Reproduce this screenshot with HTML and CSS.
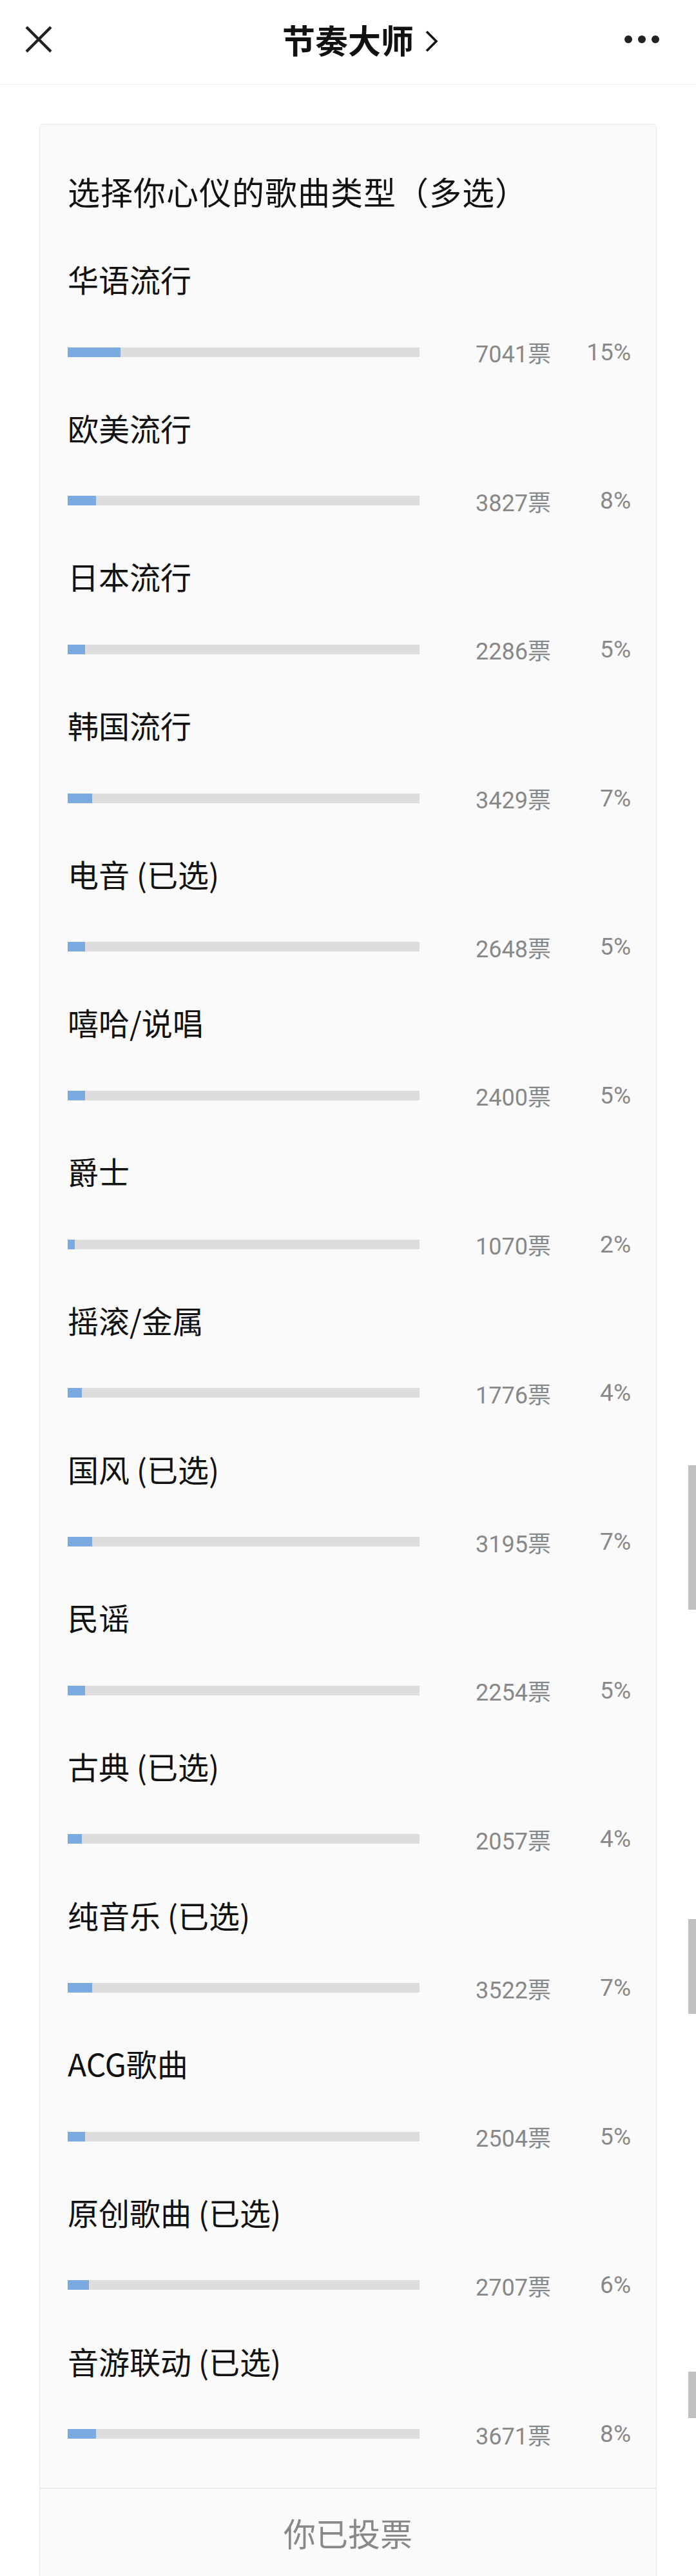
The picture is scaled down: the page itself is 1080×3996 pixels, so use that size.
FILE: index.html
```html
<!DOCTYPE html>
<html>
<head>
<meta charset="utf-8">
<title>节奏大师</title>
<link rel="stylesheet" href="styles.css">
</head>
<body>

<header class="topbar">
    <svg class="icon-close" width="42" height="42" viewBox="0 0 42 42"><path d="M2 2 L40 40 M40 2 L2 40" stroke="#222" stroke-width="4.5" fill="none"/></svg>
    <h1 class="topbar-title">节奏大师<svg class="chev" width="22" height="34" viewBox="0 0 22 34"><path d="M3 2 L18 17 L3 32" stroke="#111" stroke-width="3.6" fill="none"/></svg></h1>
    <div class="icon-more"><i></i><i></i><i></i></div>
</header>

<div class="card">
    <h2 class="vote-title">选择你心仪的歌曲类型（多选）</h2>

    <ul class="options">
        <li><p class="opt-name">华语流行</p><div class="opt-stat"><span class="bar"><b style="width:15%"></b></span><span class="votes">7041票</span><span class="pct">15%</span></div></li>
        <li><p class="opt-name">欧美流行</p><div class="opt-stat"><span class="bar"><b style="width:8%"></b></span><span class="votes">3827票</span><span class="pct">8%</span></div></li>
        <li><p class="opt-name">日本流行</p><div class="opt-stat"><span class="bar"><b style="width:5%"></b></span><span class="votes">2286票</span><span class="pct">5%</span></div></li>
        <li><p class="opt-name">韩国流行</p><div class="opt-stat"><span class="bar"><b style="width:7%"></b></span><span class="votes">3429票</span><span class="pct">7%</span></div></li>
        <li><p class="opt-name">电音 (已选)</p><div class="opt-stat"><span class="bar"><b style="width:5%"></b></span><span class="votes">2648票</span><span class="pct">5%</span></div></li>
        <li><p class="opt-name">嘻哈/说唱</p><div class="opt-stat"><span class="bar"><b style="width:5%"></b></span><span class="votes">2400票</span><span class="pct">5%</span></div></li>
        <li><p class="opt-name">爵士</p><div class="opt-stat"><span class="bar"><b style="width:2%"></b></span><span class="votes">1070票</span><span class="pct">2%</span></div></li>
        <li><p class="opt-name">摇滚/金属</p><div class="opt-stat"><span class="bar"><b style="width:4%"></b></span><span class="votes">1776票</span><span class="pct">4%</span></div></li>
        <li><p class="opt-name">国风 (已选)</p><div class="opt-stat"><span class="bar"><b style="width:7%"></b></span><span class="votes">3195票</span><span class="pct">7%</span></div></li>
        <li><p class="opt-name">民谣</p><div class="opt-stat"><span class="bar"><b style="width:5%"></b></span><span class="votes">2254票</span><span class="pct">5%</span></div></li>
        <li><p class="opt-name">古典 (已选)</p><div class="opt-stat"><span class="bar"><b style="width:4%"></b></span><span class="votes">2057票</span><span class="pct">4%</span></div></li>
        <li><p class="opt-name">纯音乐 (已选)</p><div class="opt-stat"><span class="bar"><b style="width:7%"></b></span><span class="votes">3522票</span><span class="pct">7%</span></div></li>
        <li><p class="opt-name">ACG歌曲</p><div class="opt-stat"><span class="bar"><b style="width:5%"></b></span><span class="votes">2504票</span><span class="pct">5%</span></div></li>
        <li><p class="opt-name">原创歌曲 (已选)</p><div class="opt-stat"><span class="bar"><b style="width:6%"></b></span><span class="votes">2707票</span><span class="pct">6%</span></div></li>
        <li><p class="opt-name">音游联动 (已选)</p><div class="opt-stat"><span class="bar"><b style="width:8%"></b></span><span class="votes">3671票</span><span class="pct">8%</span></div></li>
    </ul>

    <div class="voted">你已投票</div>
</div>

<!-- stitched screenshot scrollbar pieces -->
<div class="scroll s1"></div>
<div class="scroll s2"></div>
<div class="scroll s3"></div>

</body>
</html>
```

FILE: styles.css
```css
html, body { margin: 0; padding: 0; background: #FFF; color: #111; font-family: "Noto Sans CJK SC", "Noto Sans", sans-serif; }
body { position: relative; height: 3996px; overflow: hidden; }
ul { margin: 0; padding: 0; }
li { list-style-type: none; }
p, h1, h2 { margin: 0; }

/* HEADER */
.topbar { display: grid; grid-template-columns: 1fr auto 1fr; align-items: center; height: 121px; padding-bottom: 10px; border-bottom: 1px solid #F0F0F0; }
.icon-close { display: block; margin-left: 39px; }
.topbar-title { position: relative; font-size: 51px; font-weight: 700; line-height: 70px; color: #111; }
.chev { position: absolute; left: 100%; top: 21px; margin-left: 17px; }
.icon-more { display: flex; gap: 9px; justify-self: end; margin-right: 57px; }
.icon-more i { display: block; width: 12px; height: 12px; border-radius: 50%; background: #222; }

/* CARD */
.card { margin: 60px 61px 0; padding: 70px 43px 0; background: #FAFAFA; border: 1px solid #E8E8E8; border-radius: 6px; }
.vote-title { font-size: 50px; font-weight: 400; line-height: 67px; letter-spacing: 1px; margin-bottom: 69px; }

.options li { margin-bottom: 57.7px; }
.opt-name { font-size: 48px; line-height: 67px; margin-bottom: 54px; }
.opt-stat { display: flex; align-items: center; height: 52px; margin-right: -4px; font-family: Roboto, "Noto Sans CJK SC", sans-serif; font-size: 36px; color: #888; }
.bar { display: block; width: 546px; height: 15px; background: #DDDDDD; }
.bar b { display: block; height: 100%; background: #7AAAE0; }
.votes { flex: 1; text-align: right; }
.pct { width: 124px; text-align: right; font-size: 37px; }

.voted { margin: 0 -43px; padding: 32px 0 60px; border-top: 2px solid #EBEBEB; text-align: center; font-size: 50px; line-height: 70px; color: #888; }

/* SCROLLBAR */
.scroll { position: absolute; right: 0; width: 12px; background: #C1C1C1; }
.s1 { top: 2273px; height: 224px; }
.s2 { top: 2977px; height: 147px; }
.s3 { top: 3679px; height: 72px; }
```
